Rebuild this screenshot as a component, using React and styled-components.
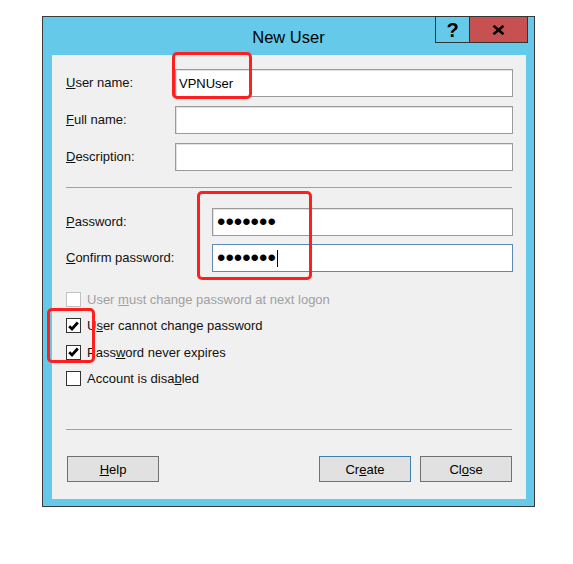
import styled, { createGlobalStyle } from "styled-components";

const GlobalStyle = createGlobalStyle`
  html, body {
    margin: 0;
    padding: 0;
    background: #ffffff;
  }
  body {
    font-family: "Liberation Sans", Arial, sans-serif;
    color: #000;
  }
`;

const Page = styled.div`
  position: relative;
  width: 573px;
  height: 564px;
  padding: 16px 0 0 42px;
  box-sizing: border-box;
`;

const Window = styled.div`
  width: 493px;
  height: 491px;
  box-sizing: border-box;
  border: 1px solid #3a3a3a;
  background: #65c9ea;
  padding: 0 8px 7px 9px;
  display: flex;
  flex-direction: column;
`;

const TitleBar = styled.div`
  height: 38px;
  margin: 0 -8px 0 -9px;
  display: grid;
  grid-template-columns: 1fr auto 1fr;
  flex-shrink: 0;
`;

const Title = styled.div`
  grid-column: 2;
  font-size: 16.5px;
  line-height: 20px;
  padding-top: 10px;
  color: #000;
`;

const Controls = styled.div`
  grid-column: 3;
  justify-self: end;
  align-self: start;
  display: flex;
  margin-top: -1px;
  margin-right: 6px;
`;

const CtrlButton = styled.div`
  width: ${(p) => (p.$close ? "58px" : "35px")};
  height: 27px;
  box-sizing: border-box;
  border: 1px solid #333;
  border-left: ${(p) => (p.$close ? "none" : "1px solid #333")};
  background: ${(p) => (p.$close ? "#c75050" : "transparent")};
  display: flex;
  align-items: center;
  justify-content: center;
  font-weight: bold;
  font-size: 20px;
  line-height: 20px;
`;

const Client = styled.div`
  flex: 1;
  background: #f0f0f0;
  padding: 14px 13px 0 14px;
  display: flex;
  flex-direction: column;
`;

const FieldGroup = styled.div`
  display: flex;
  flex-direction: column;
  gap: ${(p) => p.$gap}px;
  margin-top: ${(p) => p.$top || 0}px;
`;

const FieldRow = styled.div`
  display: grid;
  grid-template-columns: ${(p) => p.$labelWidth}px 1fr;
  align-items: center;
  height: 28px;
`;

const Label = styled.label`
  font-size: 13px;
  line-height: 16px;
  color: #111;
`;

const Field = styled.div`
  height: 28px;
  box-sizing: border-box;
  background: #fff;
  border: 1px solid ${(p) => (p.$focused ? "#5d8bb5" : "#9a9a9a")};
  box-shadow: ${(p) => (p.$focused ? "none" : "inset 1px 1px 0 #e2e2e2")};
  padding: 0 3px;
  display: flex;
  align-items: center;
  font-size: 13px;
`;

const Dots = styled.span`
  font-size: 24px;
  line-height: 20px;
  height: 20px;
  display: inline-flex;
  align-items: center;
  padding-left: 1px;
`;

const Caret = styled.span`
  width: 1px;
  height: 17px;
  background: #000;
  margin-left: 1px;
`;

const Separator = styled.div`
  height: 1px;
  background: #a0a0a0;
  margin: ${(p) => p.$top}px 1px 0 0;
  flex-shrink: 0;
`;

const Checks = styled.div`
  display: flex;
  flex-direction: column;
  margin-top: 14px;
`;

const CheckRow = styled.div`
  height: 26.5px;
  display: flex;
  align-items: center;
  gap: 6px;
  font-size: 13px;
  color: ${(p) => (p.$disabled ? "#a0a0a0" : "#111")};
`;

const Box = styled.span`
  width: 15px;
  height: 15px;
  box-sizing: border-box;
  border: 1px solid ${(p) => (p.$disabled ? "#c2c2c2" : "#333")};
  background: #fff;
  display: flex;
  align-items: center;
  justify-content: center;
  flex-shrink: 0;
`;

const ButtonRow = styled.div`
  display: flex;
  align-items: center;
  margin-top: 26px;
  padding: 0 1px;
`;

const DialogButton = styled.div`
  width: 92px;
  height: 26px;
  box-sizing: border-box;
  border: 1px solid ${(p) => (p.$default ? "#3c7fb1" : "#707070")};
  background: #e1e1e1;
  display: flex;
  align-items: center;
  justify-content: center;
  font-size: 13px;
  margin-left: ${(p) => p.$left || 0}px;
`;

const Spacer = styled.div`
  flex: 1;
`;

const Highlight = styled.div`
  position: absolute;
  left: ${(p) => p.$x}px;
  top: ${(p) => p.$y}px;
  width: ${(p) => p.$w}px;
  height: ${(p) => p.$h}px;
  box-sizing: border-box;
  border: 3px solid #ff1f1f;
  border-radius: 5px;
  pointer-events: none;
`;

function Check() {
  return (
    <svg width="11" height="10" viewBox="0 0 11 10">
      <path d="M1.2 5.2 L4 8 L9.8 1.5" fill="none" stroke="#000" strokeWidth="2.7" />
    </svg>
  );
}

function CheckOption({ checked, disabled, children }) {
  return (
    <CheckRow $disabled={disabled}>
      <Box $disabled={disabled}>{checked && <Check />}</Box>
      <span>{children}</span>
    </CheckRow>
  );
}

export default function App() {
  return (
    <>
      <GlobalStyle />
      <Page>
        <Window>
          <TitleBar>
            <Title>New User</Title>
            <Controls>
              <CtrlButton>?</CtrlButton>
              <CtrlButton $close>
                <svg width="13" height="10" viewBox="0 0 13 10">
                  <path d="M1.5 0.8 L11.5 9.2 M11.5 0.8 L1.5 9.2" stroke="#000" strokeWidth="2.6" />
                </svg>
              </CtrlButton>
            </Controls>
          </TitleBar>
          <Client>
            <FieldGroup $gap={9}>
              <FieldRow $labelWidth={109}>
                <Label><u>U</u>ser name:</Label>
                <Field>VPNUser</Field>
              </FieldRow>
              <FieldRow $labelWidth={109}>
                <Label><u>F</u>ull name:</Label>
                <Field />
              </FieldRow>
              <FieldRow $labelWidth={109}>
                <Label><u>D</u>escription:</Label>
                <Field />
              </FieldRow>
            </FieldGroup>

            <Separator $top={16} />

            <FieldGroup $gap={8} $top={20}>
              <FieldRow $labelWidth={146}>
                <Label><u>P</u>assword:</Label>
                <Field>
                  <Dots>•••••••</Dots>
                </Field>
              </FieldRow>
              <FieldRow $labelWidth={146}>
                <Label><u>C</u>onfirm password:</Label>
                <Field $focused>
                  <Dots>•••••••</Dots>
                  <Caret />
                </Field>
              </FieldRow>
            </FieldGroup>

            <Checks>
              <CheckOption disabled>
                User <u>m</u>ust change password at next logon
              </CheckOption>
              <CheckOption checked>
                U<u>s</u>er cannot change password
              </CheckOption>
              <CheckOption checked>
                Pass<u>w</u>ord never expires
              </CheckOption>
              <CheckOption>
                Account is disa<u>b</u>led
              </CheckOption>
            </Checks>

            <Separator $top={37} />

            <ButtonRow>
              <DialogButton><span><u>H</u>elp</span></DialogButton>
              <Spacer />
              <DialogButton $default><span>Cr<u>e</u>ate</span></DialogButton>
              <DialogButton $left={9}><span>Cl<u>o</u>se</span></DialogButton>
            </ButtonRow>
          </Client>
        </Window>

        <Highlight $x={172} $y={52} $w={80} $h={47} />
        <Highlight $x={197} $y={191} $w={115} $h={89} />
        <Highlight $x={47} $y={308} $w={48} $h={55} />
      </Page>
    </>
  );
}
